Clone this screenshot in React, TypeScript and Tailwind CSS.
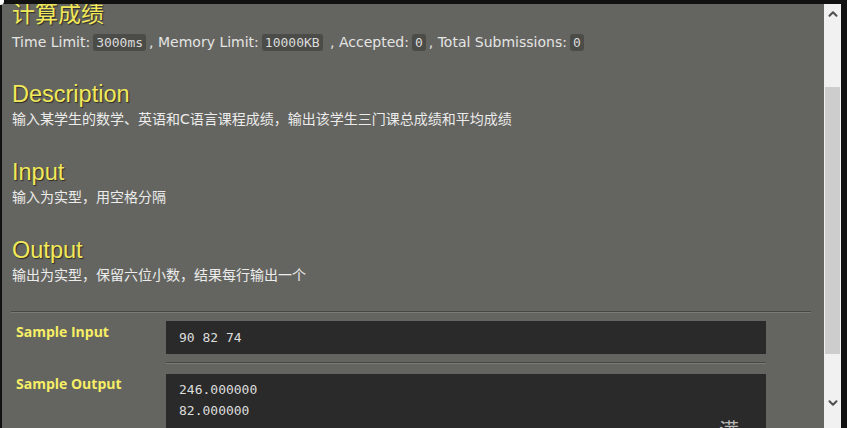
import { ChevronUp, ChevronDown } from 'lucide-react';

const sections = [
  { title: 'Description', body: '输入某学生的数学、英语和C语言课程成绩，输出该学生三门课总成绩和平均成绩' },
  { title: 'Input', body: '输入为实型，用空格分隔' },
  { title: 'Output', body: '输出为实型，保留六位小数，结果每行输出一个' },
];

const cjk = { fontFamily: '"DejaVu Sans", "Noto Sans CJK SC", sans-serif' };
const heading = { fontFamily: '"Liberation Sans", Arial, sans-serif', textShadow: '1px 1px 1px #2b2b28' };
const mono = { fontFamily: '"DejaVu Sans Mono", "Liberation Mono", monospace' };
const label = { fontFamily: '"Open Sans", "DejaVu Sans", sans-serif' };

function Badge({ children }: { children: React.ReactNode }) {
  return (
    <span className="mx-[3px] rounded-[3px] bg-[#4b4b48] px-[3px] py-[1px] text-[13px] text-[#dcdcdc]" style={mono}>
      {children}
    </span>
  );
}

export default function App() {
  return (
    <div className="relative flex h-[428px] w-[847px] overflow-hidden bg-[#111111] pl-[2px] pt-[4px] pr-[6px]">
      <div className="absolute left-0 top-0 h-[5px] w-[4px] rounded-br-[4px] bg-white" />

      <main className="flex-1 overflow-hidden bg-[#646560] pl-[10px] pr-[13px]">
        <h1 className="-mt-[3px] h-[26px] text-[23px] leading-[26px] text-[#f2e95a]" style={{ ...cjk, textShadow: '1px 1px 1px #2b2b28' }}>
          计算成绩
        </h1>
        <p className="mt-[5px] h-[20px] text-[14px] leading-[20px] text-[#e4e4e4]" style={cjk}>
          Time Limit:<Badge>3000ms</Badge>, Memory Limit:<Badge>10000KB</Badge> , Accepted:<Badge>0</Badge>, Total Submissions:<Badge>0</Badge>
        </p>

        <div className="mt-[29px] flex flex-col gap-[30px]">
          {sections.map((s) => (
            <section key={s.title}>
              <h2 className="h-[26px] text-[23.5px] leading-[26px] text-[#f2e95a]" style={heading}>
                {s.title}
              </h2>
              <p className="mt-[2px] h-[20px] text-[14px] leading-[20px] text-[#ececec]" style={cjk}>
                {s.body}
              </p>
            </section>
          ))}
        </div>

        <div className="-ml-[1px] mt-[26px] w-[800px] border-b border-t border-b-[#7a7b75] border-t-[#474843]" />

        <div className="-ml-[1px] mt-[8px] grid w-[755px] grid-cols-[155px_600px]">
          <div className="pl-[5px] pt-[2px] text-[14px] font-bold leading-[18px] text-[#f7ee66]" style={label}>
            Sample Input
          </div>
          <pre className="h-[33px] bg-[#2a2a2a] px-[13px] py-[6px] text-[13px] leading-[21px] text-[#dddddd]" style={mono}>
            90 82 74
          </pre>

          <div />
          <div className="mb-[10px] mt-[8px] border-b border-t border-b-[#7a7b75] border-t-[#474843]" />

          <div className="pl-[5px] pt-[1px] text-[14px] font-bold leading-[18px] text-[#f7ee66]" style={label}>
            Sample Output
          </div>
          <div className="relative h-[80px] bg-[#2a2a2a] px-[13px] pt-[5px]">
            <pre className="text-[13px] leading-[21px] text-[#dddddd]" style={mono}>
              {'246.000000\n82.000000'}
            </pre>
            <span className="absolute left-[553px] top-[47px] text-[20px] leading-none text-[#b9b9b9]" style={cjk}>
              满
            </span>
          </div>
        </div>
      </main>

      <aside className="flex w-[17px] flex-col bg-[#f1f1f1]">
        <div className="flex h-[17px] items-end justify-center">
          <ChevronUp className="h-[14px] w-[14px] text-[#505050]" strokeWidth={3.5} />
        </div>
        <div className="mx-[1px] mt-[66px] h-[267px] bg-[#cdcdcd]" />
        <div className="mt-[42px] flex h-[17px] items-start justify-center">
          <ChevronDown className="h-[14px] w-[14px] text-[#505050]" strokeWidth={3.5} />
        </div>
      </aside>
    </div>
  );
}
